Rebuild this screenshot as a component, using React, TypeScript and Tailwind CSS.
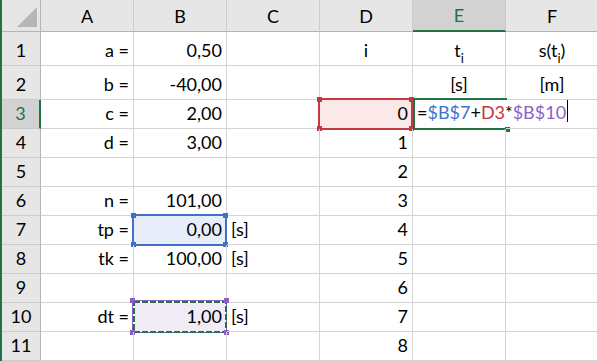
import React from 'react';

const GREEN = '#217346';

type Align = 'l' | 'r' | 'c';
type Cell = { v: React.ReactNode; a?: Align };

const Sub = ({ children }: { children: React.ReactNode }) => (
  <sub className="text-[13px] bottom-[-6px]">{children}</sub>
);

const formula = (
  <span className="whitespace-nowrap">
    <span>=</span>
    <span className="text-[#3b73d1]">$B$7</span>
    <span>+</span>
    <span className="text-[#c8323a]">D3</span>
    <span>*</span>
    <span className="text-[#8f5fc7]">$B$10</span>
    <span className="ml-[1px] inline-block h-[22px] w-[1px] bg-black align-[-3px]" />
  </span>
);

// row -> column letter -> cell
const data: Record<number, Record<string, Cell>> = {
  1: {
    A: { v: 'a =' },
    B: { v: '0,50' },
    D: { v: 'i', a: 'c' },
    E: { v: <span>t<Sub>i</Sub></span>, a: 'c' },
    F: { v: <span>s(t<Sub>i</Sub>)</span>, a: 'c' },
  },
  2: { A: { v: 'b =' }, B: { v: '-40,00' }, E: { v: '[s]', a: 'c' }, F: { v: '[m]', a: 'c' } },
  3: { A: { v: 'c =' }, B: { v: '2,00' }, D: { v: '0' }, E: { v: formula, a: 'l' } },
  4: { A: { v: 'd =' }, B: { v: '3,00' }, D: { v: '1' } },
  5: { D: { v: '2' } },
  6: { A: { v: 'n =' }, B: { v: '101,00' }, D: { v: '3' } },
  7: { A: { v: 'tp =' }, B: { v: '0,00' }, C: { v: '[s]', a: 'l' }, D: { v: '4' } },
  8: { A: { v: 'tk =' }, B: { v: '100,00' }, C: { v: '[s]', a: 'l' }, D: { v: '5' } },
  9: { D: { v: '6' } },
  10: { A: { v: 'dt =' }, B: { v: '1,00' }, C: { v: '[s]', a: 'l' }, D: { v: '7' } },
  11: { D: { v: '8' } },
};

const COLS = ['A', 'B', 'C', 'D', 'E', 'F'];
const ROWS = [1, 2, 3, 4, 5, 6, 7, 8, 9, 10, 11];

function Handles({ color }: { color: string }) {
  const cls = 'absolute h-[5px] w-[5px]';
  return (
    <>
      <span className={`${cls} -left-[3px] -top-[3px]`} style={{ background: color }} />
      <span className={`${cls} -right-[3px] -top-[3px]`} style={{ background: color }} />
      <span className={`${cls} -left-[3px] -bottom-[3px]`} style={{ background: color }} />
      <span className={`${cls} -right-[3px] -bottom-[3px]`} style={{ background: color }} />
    </>
  );
}

function Overlay({ id }: { id: string }) {
  if (id === 'D3')
    return (
      <div className="pointer-events-none absolute -bottom-[2px] -left-[2px] -right-[1px] -top-[2px] border-2 border-[#c3393f] bg-[#fbe8e8]">
        <Handles color="#c3393f" />
      </div>
    );
  if (id === 'B7')
    return (
      <div className="pointer-events-none absolute -bottom-[2px] -left-[2px] -right-[1px] -top-[2px] border-2 border-[#3f6fc6] bg-[#e8eef9]">
        <Handles color="#3f6fc6" />
      </div>
    );
  if (id === 'B10')
    return (
      <div className="pointer-events-none absolute -bottom-[2px] -left-[2px] -right-[1px] -top-[3px] border border-[#8b5fc1] bg-white">
        <svg className="absolute left-0 top-0" width="94" height="32">
          <rect x="2" y="2" width="90" height="28" fill="#efecf6" />
          <rect x="1" y="1" width="92" height="30" fill="none" stroke={GREEN} strokeWidth="2" strokeDasharray="6 2" />
        </svg>
        <Handles color="#8b5fc1" />
      </div>
    );
  if (id === 'E3')
    return (
      <div className="pointer-events-none absolute -bottom-[2px] -right-[1px] -top-[2px] left-0 border-b-2 border-l-2 border-t-2 border-[#217346]">
        <span className="absolute -bottom-[4px] -right-[3px] h-[5px] w-[5px] bg-[#217346]" />
      </div>
    );
  return null;
}

export default function App() {
  return (
    <div className="h-[361px] w-[597px] overflow-hidden border-l-2 border-[#217346] bg-white text-[18px] leading-[18px] text-black [font-family:Lato,'Open_Sans',sans-serif]">
      <div className="grid grid-cols-[39px_93px_93px_93px_93px_93px_93px] grid-rows-[32px_34px_34px_repeat(9,29px)]">
        {/* corner */}
        <div className="relative border-b border-r border-[#b4b4b4] bg-[#e6e6e6]">
          <svg className="absolute left-0 top-0" width="39" height="31">
            <polygon points="35,7 35,27 15,27" fill="#b6b6b6" />
          </svg>
        </div>
        {COLS.map(c => (
          <div
            key={c}
            className={
              c === 'E'
                ? 'flex items-end justify-center border-b-2 border-r border-b-[#217346] border-r-[#c8c8c8] bg-[#d2d2d2] pb-[6px] text-[#217346]'
                : 'flex items-end justify-center border-b border-r border-b-[#b4b4b4] border-r-[#cdcdcd] bg-[#e6e6e6] pb-[6px]'
            }
          >
            {c}
          </div>
        ))}

        {ROWS.map(r => (
          <React.Fragment key={r}>
            <div
              className={
                r === 3
                  ? 'flex items-end justify-center border-b border-r-2 border-b-[#c8c8c8] border-r-[#217346] bg-[#d2d2d2] pb-[6px] text-[#217346]'
                  : 'flex items-end justify-center border-b border-r border-b-[#cdcdcd] border-r-[#b4b4b4] bg-[#e6e6e6] pb-[6px]'
              }
            >
              {r}
            </div>
            {COLS.map(c => {
              const id = `${c}${r}`;
              const cell = data[r]?.[c];
              const a = cell?.a ?? 'r';
              const justify = a === 'c' ? 'justify-center' : a === 'l' ? 'justify-start' : 'justify-end';
              const borders = id === 'E3' ? 'border-b' : 'border-b border-r';
              return (
                <div
                  key={id}
                  className={`relative flex min-w-0 items-end ${justify} ${borders} border-[#d4d4d4] px-[4px] pb-[6px]`}
                >
                  <Overlay id={id} />
                  {cell && <span className="relative whitespace-nowrap">{cell.v}</span>}
                </div>
              );
            })}
          </React.Fragment>
        ))}
      </div>
    </div>
  );
}
